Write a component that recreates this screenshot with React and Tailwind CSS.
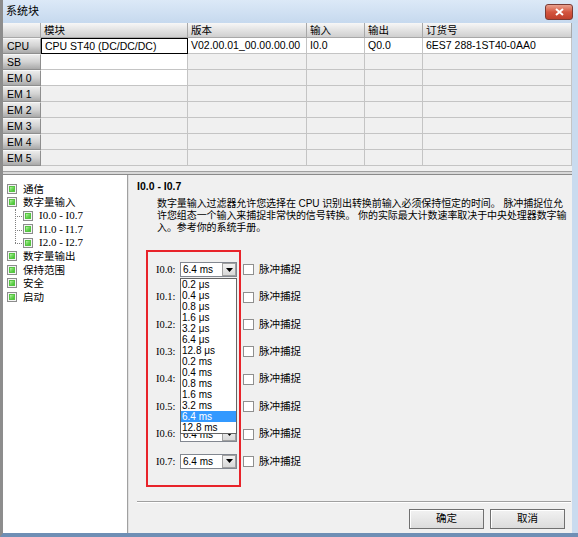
import React from "react";

const SANS = "font-['Liberation_Sans','Noto_Sans_CJK_SC',sans-serif]";
const SERIF = "font-['Liberation_Serif','Noto_Sans_CJK_SC',serif]";

function GreenIcon() {
  return (
    <span className="w-[10px] h-[10px] border border-[#8c8c8c] bg-[#f4f4f4] p-[1px] flex shrink-0">
      <span className="flex-1 bg-gradient-to-br from-[#b9f2a8] via-[#6fd85a] to-[#3fbf2c] border border-[#57c443]" />
    </span>
  );
}

const cols = "grid grid-cols-[38px_147px_119px_58px_58px_149px]";

function Table() {
  const rows = [
    { l: "CPU", cells: ["CPU ST40 (DC/DC/DC)", "V02.00.01_00.00.00.00", "I0.0", "Q0.0", "6ES7 288-1ST40-0AA0"], white: [1, 1, 1, 1, 1] },
    { l: "SB", cells: ["", "", "", "", ""], white: [1, 0, 0, 0, 0] },
    { l: "EM 0", cells: ["", "", "", "", ""], white: [1, 0, 0, 0, 0] },
    { l: "EM 1", cells: ["", "", "", "", ""], white: [0, 0, 0, 0, 0] },
    { l: "EM 2", cells: ["", "", "", "", ""], white: [0, 0, 0, 0, 0] },
    { l: "EM 3", cells: ["", "", "", "", ""], white: [0, 0, 0, 0, 0] },
    { l: "EM 4", cells: ["", "", "", "", ""], white: [0, 0, 0, 0, 0] },
    { l: "EM 5", cells: ["", "", "", "", ""], white: [0, 0, 0, 0, 0] },
  ];
  const headers = ["", "模块", "版本", "输入", "输出", "订货号"];
  return (
    <div className={`${SANS} text-[10.5px] text-black`}>
      <div className={`${cols} h-[15px]`}>
        {headers.map((h, i) => (
          <div
            key={i}
            className="bg-gradient-to-b from-[#f7f7f7] to-[#cfcfcf] border-r border-b border-[#a8a8a8] pl-[3px] leading-[14px]"
          >
            {h}
          </div>
        ))}
      </div>
      {rows.map((r, ri) => (
        <div key={ri} className={`${cols} h-[16px]`}>
          <div className="bg-gradient-to-b from-[#ececec] via-[#d2d2d2] to-[#a9a9a9] border-r border-b border-[#8e8e8e] border-t border-t-[#f8f8f8] pl-[4px] leading-[14px]">
            {r.l}
          </div>
          {r.cells.map((c, ci) => (
            <div
              key={ci}
              className={`${r.white[ci] ? "bg-white" : "bg-[#f0f0f0]"} ${
                ri === 0 && ci === 0 ? "border border-black" : "border-r border-b border-[#c4c4c4]"
              } pl-[3px] leading-[15px] whitespace-nowrap overflow-hidden`}
            >
              {c}
            </div>
          ))}
        </div>
      ))}
    </div>
  );
}

function Tree() {
  const top = ["通信", "数字量输入"];
  const sub = ["I0.0 - I0.7", "I1.0 - I1.7", "I2.0 - I2.7"];
  const rest = ["数字量输出", "保持范围", "安全", "启动"];
  const Item = ({ t, serif }) => (
    <div className="h-[13.5px] flex items-center gap-[6px]">
      <GreenIcon />
      <span className={`${serif ? SERIF + " text-[11px]" : SANS + " text-[10.5px]"} leading-none`}>{t}</span>
    </div>
  );
  return (
    <div className="w-[125px] bg-white border-r border-[#a0a0a0] pt-[7px] pl-[4px] flex flex-col">
      {top.map((t) => (
        <Item key={t} t={t} />
      ))}
      <div className="relative pl-[16px]">
        <div className="absolute left-[8px] top-0 h-[34px] border-l border-dotted border-[#808080]" />
        {sub.map((t) => (
          <div key={t} className="relative">
            <div className="absolute left-[-8px] top-[7px] w-[7px] border-t border-dotted border-[#808080]" />
            <Item t={t} serif />
          </div>
        ))}
      </div>
      {rest.map((t) => (
        <Item key={t} t={t} />
      ))}
    </div>
  );
}

function Select({ value = "6.4 ms" }) {
  return (
    <div className="w-[57px] h-[15px] border border-[#828790] bg-white flex items-stretch">
      <span className={`${SANS} flex-1 text-[10px] leading-[13px] pl-[2px]`}>{value}</span>
      <span className="w-[14px] bg-gradient-to-b from-[#f2f2f2] to-[#d8d8d8] border border-[#a0a0a0] flex items-center justify-center">
        <svg width="7" height="4" viewBox="0 0 7 4">
          <path d="M0 0H7L3.5 4Z" fill="#000" />
        </svg>
      </span>
    </div>
  );
}

function Dropdown() {
  const items = ["0.2 μs", "0.4 μs", "0.8 μs", "1.6 μs", "3.2 μs", "6.4 μs", "12.8 μs", "0.2 ms", "0.4 ms", "0.8 ms", "1.6 ms", "3.2 ms", "6.4 ms", "12.8 ms"];
  return (
    <div className="absolute left-[34px] top-[25px] w-[57px] bg-white border border-[#646464] flex flex-col z-10">
      {items.map((t) => (
        <div
          key={t}
          className={`${SANS} h-[11px] text-[10px] leading-[11px] pl-[1px] ${t === "6.4 ms" ? "bg-[#3399ff] text-white" : "text-black"}`}
        >
          {t}
        </div>
      ))}
    </div>
  );
}

function Checkbox() {
  return <span className="w-[11px] h-[11px] border border-[#8f8f8f] bg-white shrink-0" />;
}

function RightPanel() {
  const rows = ["I0.0:", "I0.1:", "I0.2:", "I0.3:", "I0.4:", "I0.5:", "I0.6:", "I0.7:"];
  return (
    <div className="flex-1 bg-[#f0f0f0] flex flex-col pl-[7px] pr-[1px]">
      <div className={`${SANS} text-[10.5px] font-bold mt-[5px] leading-[13px]`}>I0.0 - I0.7</div>
      <div className={`${SANS} text-[10px] leading-[12px] pl-[20px] mt-[5px] whitespace-nowrap tracking-[-0.08px]`}>
        <div>数字量输入过滤器允许您选择在 CPU 识别出转换前输入必须保持恒定的时间。 脉冲捕捉位允</div>
        <div>许您组态一个输入来捕捉非常快的信号转换。 你的实际最大计数速率取决于中央处理器数字输</div>
        <div>入。参考你的系统手册。</div>
      </div>
      <div className="relative ml-[9px] mt-[19px] h-[236px]">
        <div className="absolute left-[0px] top-[-3px] w-[95px] h-[237px] border-2 border-[#e8232a] pointer-events-none" />
        <div className="relative flex flex-col pt-[3px] pl-[10px]">
          {rows.map((r) => (
            <div key={r} className="h-[27.4px] flex items-center">
              <span className={`${SERIF} text-[10.5px] w-[24px]`}>{r}</span>
              <Select />
              <span className="w-[6px]" />
              <Checkbox />
              <span className={`${SANS} text-[10.5px] ml-[5px]`}>脉冲捕捉</span>
            </div>
          ))}
          <Dropdown />
        </div>
      </div>
      <div className="mt-[12px] border-t border-[#a0a0a0] border-b border-b-white" />
      <div className="flex justify-end gap-[6px] mt-[6px] pr-[6px]">
        {["确定", "取消"].map((b) => (
          <div
            key={b}
            className={`${SANS} w-[75px] h-[20px] border border-[#707070] bg-gradient-to-b from-[#f2f2f2] to-[#dcdcdc] text-[10.5px] flex items-center justify-center shadow-[inset_1px_1px_0_#fff]`}
          >
            {b}
          </div>
        ))}
      </div>
    </div>
  );
}

export default function App() {
  return (
    <div className="w-[578px] h-[537px] overflow-hidden bg-[#c9dbef] flex flex-col border-l-[3px] border-l-[#8d8d8d] border-b-[4px] border-b-[#6f8fb5]">
      <div className="h-[23px] shrink-0 bg-gradient-to-b from-[#dce9f7] to-[#c6d9ee] flex items-center justify-between pl-[3px] pr-[5px]">
        <span className={`${SANS} text-[11px] text-black`}>系统块</span>
        <span className="w-[28px] h-[16px] rounded-[3px] border border-[#7a3b34] bg-gradient-to-b from-[#e9a18f] via-[#d3553f] to-[#c0402c] flex items-center justify-center">
          <svg width="9" height="8" viewBox="0 0 9 8">
            <path d="M1 1L8 7M8 1L1 7" stroke="#fff" strokeWidth="2" />
          </svg>
        </span>
      </div>
      <div className="flex-1 flex flex-col bg-[#f0f0f0] mr-[6px]">
        <Table />
        <div className="h-[6px] border-b border-[#a0a0a0] bg-[#f0f0f0]" />
        <div className="h-[3px] bg-[#d8d8d8] border-b border-[#8a8a8a]" />
        <div className="flex-1 flex">
          <Tree />
          <div className="w-[2px] bg-[#f0f0f0] border-l border-[#e0e0e0]" />
          <RightPanel />
        </div>
      </div>
    </div>
  );
}
